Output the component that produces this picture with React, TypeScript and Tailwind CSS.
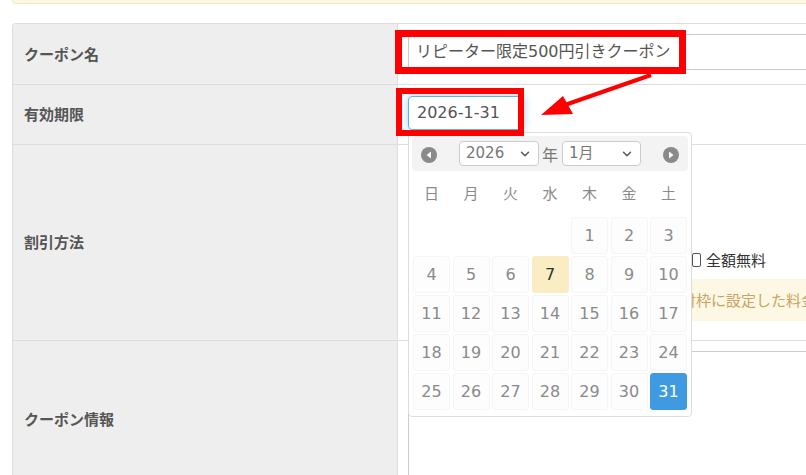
import { ChevronDown } from "lucide-react";

const FONT = "font-['DejaVu_Sans','Noto_Sans_CJK_JP',sans-serif]";
const JP = "font-['Noto_Sans_CJK_JP',sans-serif]";

const WEEK = ["日", "月", "火", "水", "木", "金", "土"];

// Jan 2026 starts on Thursday
const DAYS: (number | null)[] = [
  null, null, null, null,
  ...Array.from({ length: 31 }, (_, i) => i + 1),
];

function NavIcon({ dir }: { dir: "prev" | "next" }) {
  return (
    <svg viewBox="0 0 16 16" className="mt-[3px] h-[16px] w-[16px]">
      <circle cx="8" cy="8" r="8" fill="#8a8a8a" />
      {dir === "prev" ? (
        <path d="M10 4.5 L5.5 8 L10 11.5 Z" fill="#fff" />
      ) : (
        <path d="M6 4.5 L10.5 8 L6 11.5 Z" fill="#fff" />
      )}
    </svg>
  );
}

function FakeSelect({ value, width }: { value: string; width: string }) {
  return (
    <div
      className={`${width} flex h-[25px] items-center justify-between rounded-[4px] border border-[#ccc] bg-white pl-[6px] pr-[6px] text-[15px] text-[#777]`}
    >
      <span>{value}</span>
      <ChevronDown className="h-[14px] w-[14px] text-[#555]" strokeWidth={2.5} />
    </div>
  );
}

function Calendar() {
  return (
    <div className="absolute left-[408px] top-[132px] w-[284px] rounded-[4px] border border-[#ddd] bg-white px-[3px] pt-[3px] pb-[6px]">
      {/* Header */}
      <div className="flex h-[35px] items-center rounded-[4px] bg-[#f3f3f3] px-[9px]">
        <NavIcon dir="prev" />
        <div className="ml-[22px]">
          <FakeSelect value="2026" width="w-[80px]" />
        </div>
        <span className={`ml-[3px] text-[16px] text-[#777] ${JP}`}>年</span>
        <div className="ml-[4px]">
          <FakeSelect value="1月" width="w-[79px]" />
        </div>
        <div className="ml-auto">
          <NavIcon dir="next" />
        </div>
      </div>

      {/* Week row */}
      <div className={`grid h-[44px] grid-cols-[repeat(7,37px)] items-center gap-x-[2.5px] px-[1px] text-center text-[15px] text-[#8a8a8a] ${JP}`}>
        {WEEK.map((w) => (
          <div key={w}>{w}</div>
        ))}
      </div>

      {/* Days */}
      <div className="mt-[2px] grid grid-cols-[repeat(7,37px)] gap-x-[2.5px] gap-y-[2px] px-[1px]">
        {DAYS.map((d, i) => {
          if (d === null) return <div key={i} className="h-[37px]" />;
          let cls = "border-[#f5f5f5] bg-[#fdfdfd] text-[#8a8a8a]";
          if (d === 7) cls = "border-[#faedc4] bg-[#faedc4] text-[#333]";
          if (d === 31) cls = "border-[#3f9ae2] bg-[#3f9ae2] text-white";
          return (
            <div
              key={i}
              className={`flex h-[37px] items-center justify-center rounded-[3px] border text-[16px] ${cls}`}
            >
              {d}
            </div>
          );
        })}
      </div>
    </div>
  );
}

export default function App() {
  return (
    <div className={`relative h-[475px] w-[806px] overflow-hidden bg-white ${FONT}`}>
      {/* alert strip above */}
      <div className="ml-[12px] h-[4px] w-[900px] rounded-b-[4px] border border-t-0 border-[#f5e6c4] bg-[#fcf8e3]" />

      {/* Form table */}
      <div className="ml-[12px] mt-[19px] w-[900px] rounded-tl-[4px] border-l border-t border-[#ddd]">
        <div className="grid h-[61px] grid-cols-[385px_1fr] border-b border-[#ddd]">
          <div className={`flex items-center rounded-tl-[4px] border-r border-[#ddd] bg-[#eee] pl-[11px] text-[15px] font-bold text-[#555] ${JP}`}>
            クーポン名
          </div>
          <div className="pl-[10px] pt-[10px]">
            <div className="flex h-[36px] items-center rounded-[4px] border border-[#ccc] px-[7px] text-[16px] text-[#555]">
              リピーター限定500円引きクーポン
            </div>
          </div>
        </div>

        <div className="grid h-[60px] grid-cols-[385px_1fr] border-b border-[#ddd]">
          <div className={`flex items-center border-r border-[#ddd] bg-[#eee] pl-[11px] text-[15px] font-bold text-[#555] ${JP}`}>
            有効期限
          </div>
          <div className="pl-[10px] pt-[11px]">
            <div className="flex h-[34px] w-[116px] items-center rounded-[4px] border border-[#66afe9] px-[8px] text-[16px] text-[#555] shadow-[0_0_8px_rgba(102,175,233,0.6)]">
              2026-1-31
            </div>
          </div>
        </div>

        <div className="grid h-[196px] grid-cols-[385px_1fr] border-b border-[#ddd]">
          <div className={`flex items-center border-r border-[#ddd] bg-[#eee] pl-[11px] text-[15px] font-bold text-[#555] ${JP}`}>
            割引方法
          </div>
          <div className={`pl-[10px] pt-[100px] text-[15px] text-[#333] ${JP}`}>
            <div className="flex h-[30px] items-center">
              <div className="w-[284px]" />
              <span className="h-[14px] w-[9px] rounded-[2px] border border-[#555]" />
              <span className="ml-[5px]">全額無料</span>
            </div>
            <div className="mt-[4px] flex h-[42px] items-center overflow-hidden whitespace-nowrap rounded-[4px] bg-[#fcf8e3] pl-[18px] text-[15px] text-[#c9a264]">
              割引後の金額が０円以下の場合は、受付枠に設定した料金
            </div>
          </div>
        </div>

        <div className="grid h-[156px] grid-cols-[385px_1fr] overflow-hidden">
          <div className={`flex items-center border-r border-[#ddd] bg-[#eee] pl-[11px] text-[15px] font-bold text-[#555] ${JP}`}>
            クーポン情報
          </div>
          <div className="pl-[10px] pt-[10px]">
            <div className="h-[140px] rounded-[4px] border border-[#ccc]" />
          </div>
        </div>
      </div>

      <Calendar />

      {/* Annotations */}
      <div className="absolute left-[395px] top-[30px] h-[44px] w-[291px] border-[7px] border-[#ff0000]" />
      <div className="absolute left-[396px] top-[88px] h-[48px] w-[128px] border-[6px] border-[#ff0000]" />
      <svg className="pointer-events-none absolute left-0 top-0" width="806" height="475">
        <line x1="651" y1="75" x2="562" y2="106" stroke="#ff0000" strokeWidth="4" />
        <polygon points="541,115 563,96 573,114" fill="#ff0000" />
      </svg>
    </div>
  );
}
